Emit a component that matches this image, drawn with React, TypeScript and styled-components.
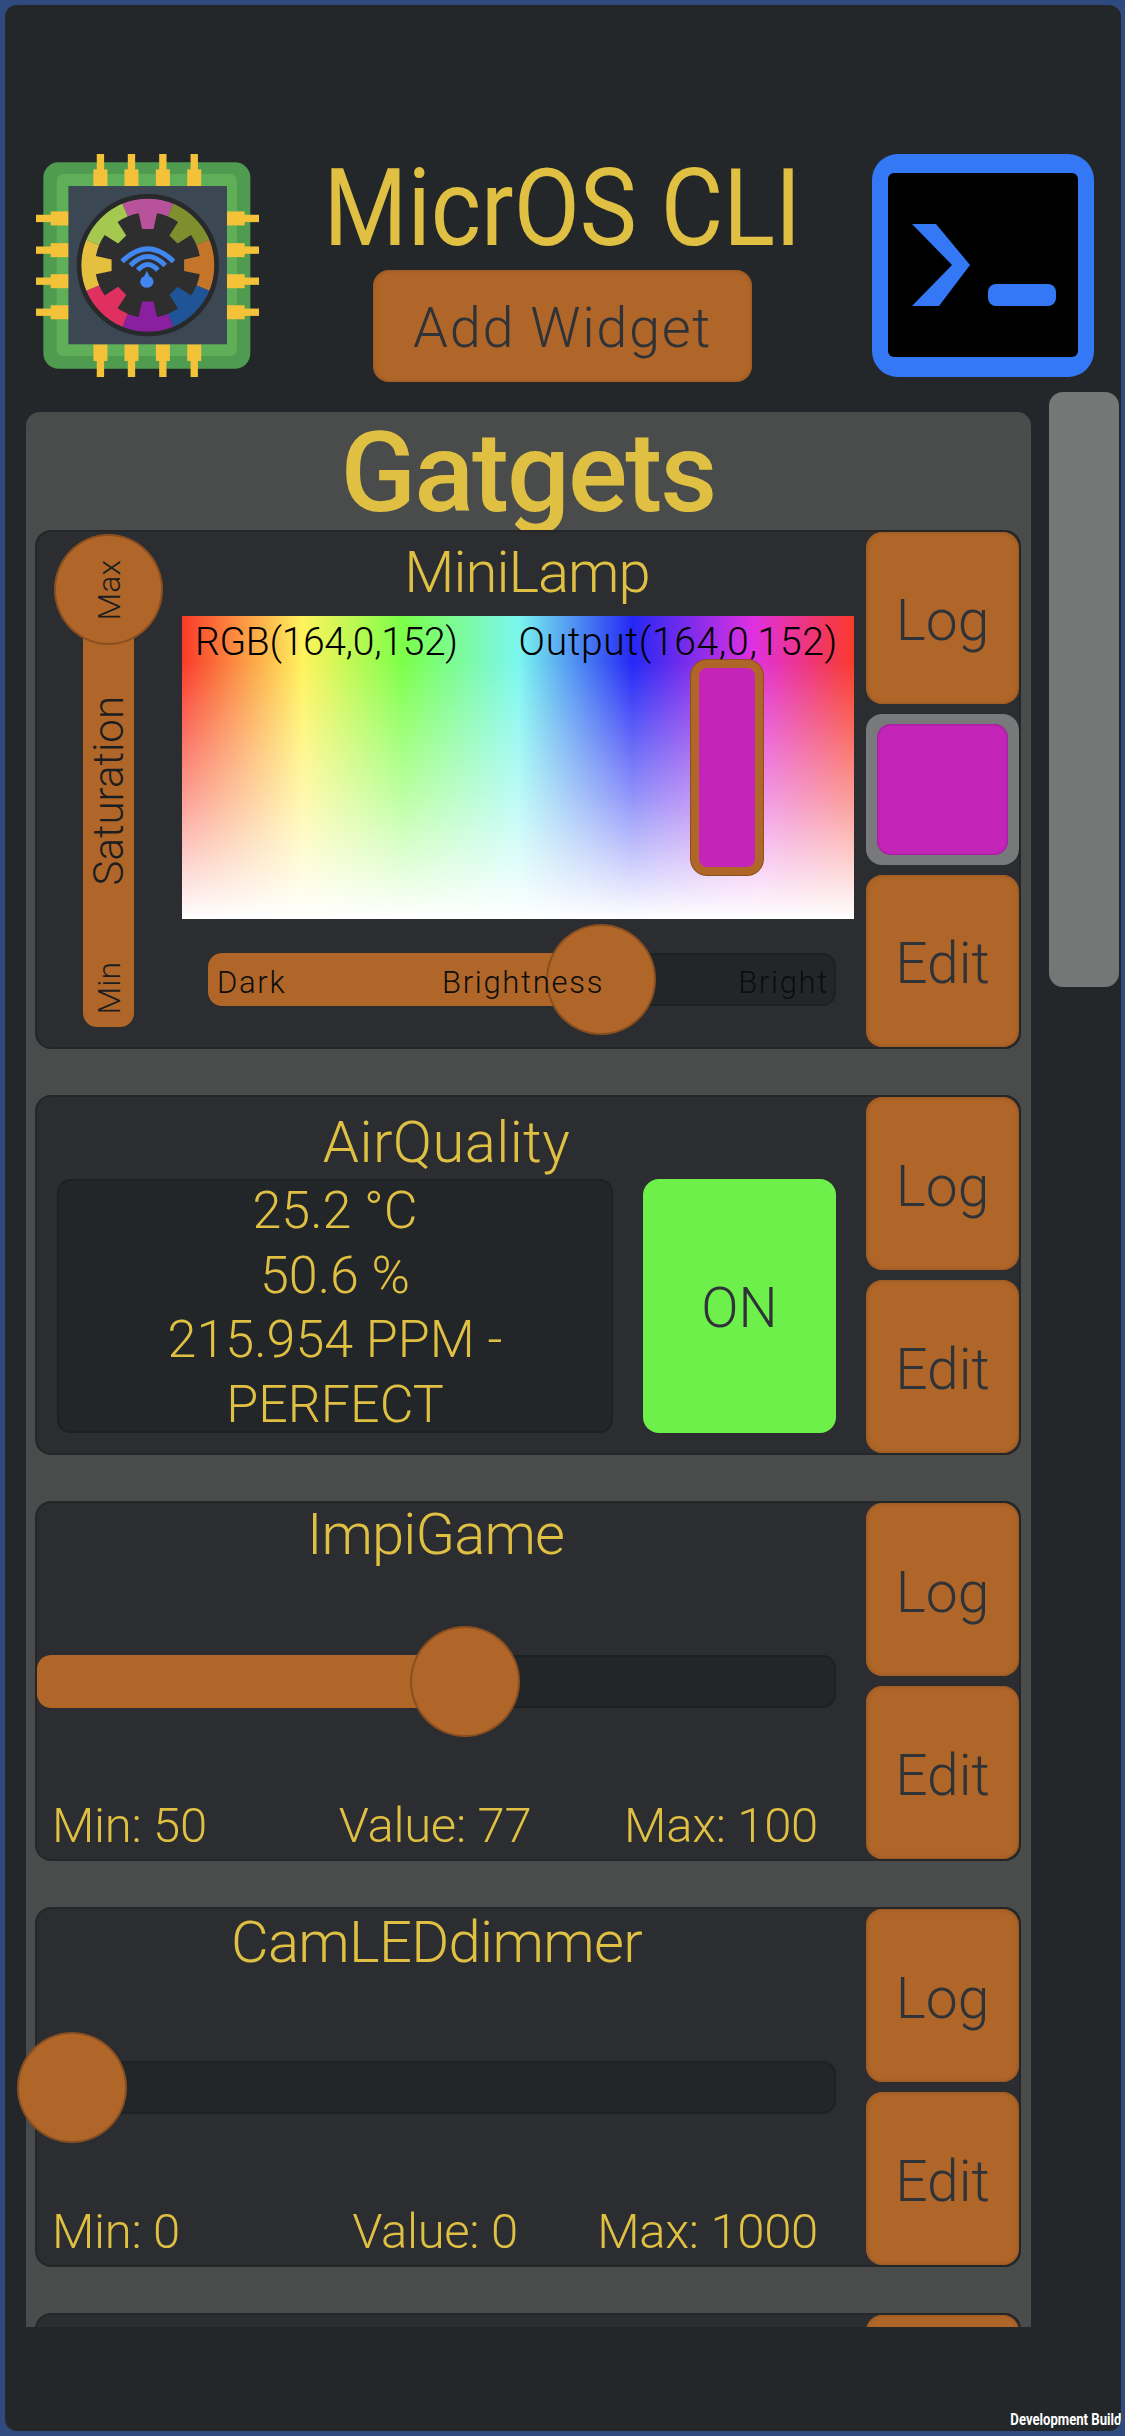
import styled, { createGlobalStyle } from "styled-components";

const FONT = `Roboto, "Liberation Sans", sans-serif`;
const GOLD = "#e0c043";
const ORANGE = "#b06628";
const INK = "#2f3338";

const GlobalStyle = createGlobalStyle`
  html, body {
    margin: 0;
    padding: 0;
    background: #2f4a7e;
  }
`;

// Layout
const Frame = styled.div`
  position: relative;
  box-sizing: border-box;
  width: 1116px;
  height: 2426px;
  margin: 5px 4px 5px 5px;
  background: #24272a;
  border-radius: 12px;
  overflow: hidden;
  font-family: ${FONT};
`;

const Header = styled.header`
  box-sizing: border-box;
  height: 387px;
  padding: 149px 27px 0 31px;
  display: grid;
  grid-template-columns: 223px 1fr 222px;
  align-items: start;
`;

const HeaderCenter = styled.div`
  display: flex;
  flex-direction: column;
  align-items: center;
  margin-left: -6px;
`;

const AppTitle = styled.h1`
  margin: -4px 0 0;
  height: 120px;
  font-size: 108px;
  line-height: 116px;
  font-weight: 400;
  color: ${GOLD};
  white-space: nowrap;
  transform: scaleX(0.89);
`;

const AddButton = styled.button`
  width: 379px;
  height: 112px;
  border: 0;
  padding: 4px 0 0;
  border-radius: 16px;
  background: ${ORANGE};
  box-shadow: inset 0 0 4px #8a4f20;
  color: ${INK};
  font-family: ${FONT};
  font-size: 56px;
  font-weight: 300;
  letter-spacing: 1.6px;
`;

const MainRow = styled.main`
  display: flex;
  align-items: flex-start;
  padding-left: 11px;
`;

// clips the list vertically but leaves room for a slider thumb that pokes out on the left
const ScrollView = styled.div`
  width: 1015px;
  height: 1919px;
  margin-top: 16px;
  padding: 4px 0 0 10px;
  box-sizing: border-box;
  overflow: hidden;
`;

const Panel = styled.section`
  display: flow-root;
  box-sizing: border-box;
  padding: 0 12px 0 11px;
  background: #4a4c4b;
  border-radius: 14px 14px 0 0;
`;

const PanelTitle = styled.h2`
  margin: -4px 0 0;
  height: 124px;
  text-align: center;
  font-size: 111px;
  line-height: 130px;
  font-weight: 500;
  letter-spacing: -2px;
  color: ${GOLD};
`;

const ScrollThumb = styled.div`
  width: 70px;
  height: 595px;
  margin-left: 18px;
  background: #757676;
  border-radius: 14px;
`;

const Card = styled.article<{ $height: number }>`
  position: relative;
  display: grid;
  grid-template-columns: 1fr 153px;
  height: ${(p) => p.$height}px;
  margin-bottom: 50px;
  background: #2b2d30;
  border-radius: 14px;
  box-shadow: 0 0 0 2px #242628;
`;

const CardBody = styled.div`
  min-width: 0;
  padding-right: 30px;
`;

const SideButtons = styled.div`
  display: flex;
  flex-direction: column;
  gap: 10px;
`;

const SideButton = styled.button`
  flex: 1;
  border: 0;
  padding: 5px 0 0;
  border-radius: 16px;
  background: ${ORANGE};
  box-shadow: inset 0 0 4px #8a4f20;
  color: ${INK};
  font-family: ${FONT};
  font-size: 57px;
  font-weight: 300;
`;

const Swatch = styled.div`
  box-sizing: border-box;
  height: 151px;
  padding: 10px 11px;
  background: #77797a;
  border-radius: 16px;
`;

const SwatchColor = styled.div<{ $color: string }>`
  height: 100%;
  background: ${(p) => p.$color};
  border-radius: 14px;
  box-shadow: inset 0 0 3px #7e1a80;
`;

const CardTitle = styled.h3<{ $shift?: number; $top: number; $spacing?: number }>`
  box-sizing: border-box;
  margin: 0;
  height: 70px;
  padding-top: ${(p) => p.$top}px;
  text-align: center;
  transform: translateX(${(p) => p.$shift ?? 0}px);
  font-size: 58px;
  line-height: 60px;
  font-weight: 300;
  letter-spacing: ${(p) => p.$spacing ?? 0}px;
  color: ${GOLD};
`;

// MiniLamp
const LampLayout = styled.div`
  display: grid;
  grid-template-columns: 145px 1fr;
  height: 100%;
`;

const SaturationTrack = styled.div`
  position: relative;
  box-sizing: border-box;
  width: 51px;
  height: 491px;
  margin: 4px 0 0 46px;
  padding: 24px 0 13px;
  display: flex;
  flex-direction: column;
  justify-content: space-between;
  align-items: center;
  background: ${ORANGE};
  border-radius: 14px;
`;

const SaturationThumb = styled.div`
  position: absolute;
  top: 0;
  left: -27px;
  width: 105px;
  height: 107px;
  background: ${ORANGE};
  border-radius: 50%;
  box-shadow: 0 0 0 2px #8a4f20;
`;

const VerticalLabel = styled.span<{ $size: number }>`
  position: relative;
  writing-mode: vertical-rl;
  transform: rotate(180deg);
  font-size: ${(p) => p.$size}px;
  font-weight: 300;
  line-height: 1;
  color: #1b1d1f;
`;

const LampMain = styled.div`
  padding-right: 12px;
`;

const ColorField = styled.div`
  position: relative;
  box-sizing: border-box;
  width: 672px;
  height: 303px;
  margin-top: 14px;
  padding: 0 16px 0 13px;
  display: flex;
  justify-content: space-between;
  background:
    linear-gradient(to bottom, rgba(255, 255, 255, 0) 15%, rgba(255, 255, 255, 0.5) 60%, #fff 100%),
    linear-gradient(to right, #f93a2a 0%, #fff35c 18%, #7bff4a 33%, #7bf7ee 50%, #2428f5 67%, #e030e0 85%, #f93a2a 100%);
`;

const FieldLabel = styled.span<{ $spacing: number }>`
  position: relative;
  z-index: 1;
  height: 52px;
  font-size: 39px;
  font-weight: 300;
  line-height: 52px;
  letter-spacing: ${(p) => p.$spacing}px;
  color: #000;
`;

const ColorHandle = styled.div<{ $color: string }>`
  position: absolute;
  left: 509px;
  top: 44px;
  box-sizing: border-box;
  width: 72px;
  height: 215px;
  background: ${(p) => p.$color};
  border: 8px solid ${ORANGE};
  border-radius: 16px;
  box-shadow: 0 0 0 1px #8a4f20;
`;

// Slider
const Track = styled.div<{ $left?: number; $right?: number; $top: number }>`
  position: relative;
  box-sizing: border-box;
  height: 53px;
  margin: ${(p) => p.$top}px ${(p) => p.$right ?? 0}px 0 ${(p) => p.$left ?? 0}px;
  background: #232628;
  border-radius: 14px;
  box-shadow: inset 0 0 0 2px #1e2022;
`;

const Fill = styled.div<{ $value: number }>`
  position: absolute;
  inset: 0 auto 0 0;
  width: calc(35px + (100% - 71px) * ${(p) => p.$value});
  background: ${ORANGE};
  border-radius: 14px 0 0 14px;
`;

const Thumb = styled.div<{ $value: number }>`
  position: absolute;
  top: -27px;
  left: calc(35px + (100% - 71px) * ${(p) => p.$value} - 53px);
  width: 106px;
  height: 107px;
  background: ${ORANGE};
  border-radius: 50%;
  box-shadow: 0 0 0 2px #8a4f20;
`;

const TrackLabels = styled.div`
  position: relative;
  box-sizing: border-box;
  height: 100%;
  padding: 5px 7px 0 9px;
  display: grid;
  grid-template-columns: 1fr auto 1fr;
  align-items: center;
  font-size: 31px;
  font-weight: 300;
  letter-spacing: 1.7px;
  color: #0c0d0e;
`;

const LastCell = styled.span`
  justify-self: end;
`;

const Readings = styled.div`
  display: grid;
  grid-template-columns: 1fr auto 1fr;
  margin-top: 90px;
  padding: 0 18px 0 15px;
  font-size: 49px;
  font-weight: 300;
  line-height: 56px;
  letter-spacing: -0.3px;
  color: ${GOLD};
`;

// AirQuality
const SensorRow = styled.div`
  display: grid;
  grid-template-columns: 556px 193px;
  gap: 30px;
  padding-left: 20px;
  margin-top: 12px;
`;

const SensorBox = styled.div`
  height: 254px;
  background: #232628;
  border-radius: 14px;
  box-shadow: inset 0 0 0 2px #1e2022;
  text-align: center;
  font-size: 52px;
  font-weight: 300;
  line-height: 64.5px;
  color: ${GOLD};
`;

const OnButton = styled.button`
  height: 254px;
  border: 0;
  padding: 4px 0 0;
  border-radius: 16px;
  background: #6df04a;
  color: ${INK};
  font-family: ${FONT};
  font-size: 55px;
  font-weight: 300;
`;

const BuildTag = styled.span`
  position: absolute;
  right: 0;
  bottom: 2px;
  font-size: 16px;
  line-height: 18px;
  font-weight: 700;
  transform: scaleX(0.82);
  transform-origin: right;
  color: #fff;
`;

// Drawn logo: coordinates taken from a 780px crop, hence the odd viewBox
const PIN_TOP = [241, 334, 428, 522];
const PIN_SIDE = [265, 360, 453, 546];
const WEDGES = ["#b8529a", "#7f8f2e", "#c4752a", "#1f5596", "#8a1fa0", "#e0305f", "#e5c03e", "#a5c850"];
const CX = 383;
const CY = 405;

const polar = (r: number, deg: number) => {
  const a = ((deg - 90) * Math.PI) / 180;
  return `${(CX + r * Math.cos(a)).toFixed(1)} ${(CY + r * Math.sin(a)).toFixed(1)}`;
};

const wedgePath = (i: number) => {
  const mid = i * 45;
  return `M${CX} ${CY} L${polar(200, mid - 22.5)} A200 200 0 0 1 ${polar(200, mid + 22.5)} Z`;
};

const gearPath = () => {
  let d = "";
  for (let i = 0; i < 8; i++) {
    const mid = i * 45;
    d += `${i === 0 ? "M" : "L"}${polar(158, mid - 10)} L${polar(110, mid - 9)} L${polar(110, mid + 9)} L${polar(158, mid + 10)} A158 158 0 0 1 ${polar(158, mid + 35)} `;
  }
  return d + "Z";
};

const ChipLogo = () => (
  <svg width={223} height={223} viewBox="48 72 668 668">
    <rect x={70} y={97} width={620} height={618} rx={46} fill="#4f9c50" />
    <rect x={110} y={132} width={540} height={545} rx={20} fill="#5fae58" />
    {PIN_TOP.map((x) => (
      <g key={x} fill="#f3c239">
        <rect x={x - 11} y={72} width={22} height={50} />
        <rect x={x - 21} y={118} width={42} height={50} />
        <rect x={x - 21} y={642} width={42} height={50} />
        <rect x={x - 11} y={690} width={22} height={50} />
      </g>
    ))}
    {PIN_SIDE.map((y) => (
      <g key={y} fill="#f3c239">
        <rect x={48} y={y - 11} width={50} height={22} />
        <rect x={92} y={y - 21} width={55} height={42} />
        <rect x={618} y={y - 21} width={55} height={42} />
        <rect x={670} y={y - 11} width={46} height={22} />
      </g>
    ))}
    <rect x={145} y={168} width={475} height={474} fill="#3b4853" />
    {WEDGES.map((c, i) => (
      <path key={c} d={wedgePath(i)} fill={c} />
    ))}
    <circle cx={CX} cy={CY} r={206} fill="none" stroke="#27292b" strokeWidth={14} />
    <path d={gearPath()} fill="#2e2e2e" />
    <g fill="none" stroke="#4088f0" strokeWidth={15}>
      <path d="M306 394 Q383 318 460 394" />
      <path d="M331 406 Q383 352 435 406" />
      <path d="M353 420 Q383 386 413 420" />
    </g>
    <path d="M380 422 L388 438 A20 18 0 1 1 372 438 Z" fill="#4088f0" />
  </svg>
);

const TerminalLogo = () => (
  <svg width={222} height={223} viewBox="0 0 222 223">
    <rect width={222} height={223} rx={26} fill="#3478f6" />
    <rect x={16} y={19} width={190} height={184} rx={6} fill="#000" />
    <path d="M40 70 H64 L98 111 L67 152 H40 L80 111 Z" fill="#3478f6" />
    <rect x={116} y={130} width={68} height={22} rx={8} fill="#3478f6" />
  </svg>
);

const ValueSlider = ({ value, min, current, max }: { value: number; min: string; current: string; max: string }) => (
  <>
    <Track $top={82}>
      <Fill $value={value} />
      <Thumb $value={value} />
    </Track>
    <Readings>
      <span>{min}</span>
      <span>{current}</span>
      <LastCell>{max}</LastCell>
    </Readings>
  </>
);

const LogEdit = () => (
  <SideButtons>
    <SideButton>Log</SideButton>
    <SideButton>Edit</SideButton>
  </SideButtons>
);

const App = () => {
  const lampColor = "#c424b8";

  return (
    <Frame>
      <GlobalStyle />
      <Header>
        <ChipLogo />
        <HeaderCenter>
          <AppTitle>MicrOS CLI</AppTitle>
          <AddButton>Add Widget</AddButton>
        </HeaderCenter>
        <TerminalLogo />
      </Header>

      <MainRow>
        <ScrollView>
          <Panel>
            <PanelTitle>Gatgets</PanelTitle>

            <Card $height={515}>
              <LampLayout>
                <SaturationTrack>
                  <SaturationThumb />
                  <VerticalLabel $size={32}>Max</VerticalLabel>
                  <VerticalLabel $size={42}>Saturation</VerticalLabel>
                  <VerticalLabel $size={32}>Min</VerticalLabel>
                </SaturationTrack>
                <LampMain>
                  <CardTitle $shift={9} $top={10} $spacing={-1}>MiniLamp</CardTitle>
                  <ColorField>
                    <FieldLabel $spacing={-0.3}>RGB(164,0,152)</FieldLabel>
                    <FieldLabel $spacing={0.7}>Output(164,0,152)</FieldLabel>
                    <ColorHandle $color={lampColor} />
                  </ColorField>
                  <Track $top={34} $left={26} $right={18}>
                    <Fill $value={0.643} />
                    <Thumb $value={0.643} />
                    <TrackLabels>
                      <span>Dark</span>
                      <span>Brightness</span>
                      <LastCell>Bright</LastCell>
                    </TrackLabels>
                  </Track>
                </LampMain>
              </LampLayout>
              <SideButtons>
                <SideButton>Log</SideButton>
                <Swatch>
                  <SwatchColor $color={lampColor} />
                </Swatch>
                <SideButton>Edit</SideButton>
              </SideButtons>
            </Card>

            <Card $height={356}>
              <CardBody>
                <CardTitle $shift={10} $top={15} $spacing={0.4}>AirQuality</CardTitle>
                <SensorRow>
                  <SensorBox>
                    <div>25.2 °C</div>
                    <div>50.6 %</div>
                    <div>215.954 PPM -</div>
                    <div>PERFECT</div>
                  </SensorBox>
                  <OnButton>ON</OnButton>
                </SensorRow>
              </CardBody>
              <LogEdit />
            </Card>

            <Card $height={356}>
              <CardBody>
                <CardTitle $shift={-1} $top={1} $spacing={-0.9}>ImpiGame</CardTitle>
                <ValueSlider value={0.54} min="Min: 50" current="Value: 77" max="Max: 100" />
              </CardBody>
              <LogEdit />
            </Card>

            <Card $height={356}>
              <CardBody>
                <CardTitle $top={3} $spacing={-0.7}>CamLEDdimmer</CardTitle>
                <ValueSlider value={0} min="Min: 0" current="Value: 0" max="Max: 1000" />
              </CardBody>
              <LogEdit />
            </Card>

            <Card $height={356}>
              <CardBody />
              <SideButtons>
                <SideButton />
              </SideButtons>
            </Card>
          </Panel>
        </ScrollView>
        <ScrollThumb />
      </MainRow>

      <BuildTag>Development Build</BuildTag>
    </Frame>
  );
};

export default App;
